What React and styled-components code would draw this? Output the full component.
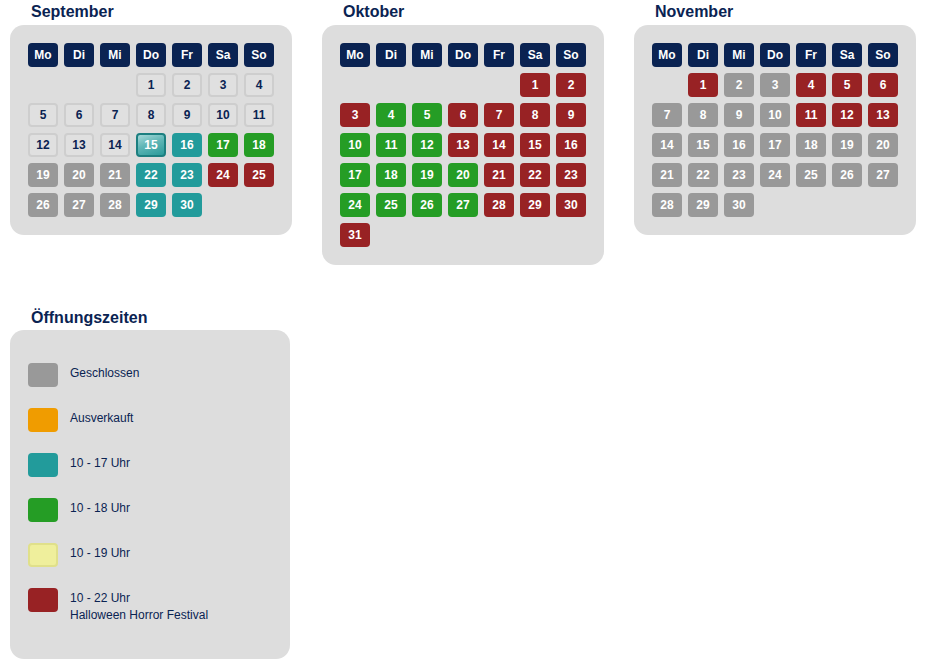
import React from "react";
import styled, { createGlobalStyle, css } from "styled-components";

const Global = createGlobalStyle`
  html, body { margin: 0; padding: 0; background: #ffffff; }
  body { font-family: "Liberation Sans", Arial, sans-serif; }
`;

const NAVY = "#0a2352";

const COLORS = {
  closed: "#999999",
  soldout: "#f09c00",
  h17: "#229b9b",
  h18: "#259d25",
  h19: "#efef9c",
  h22: "#982224",
};

const Page = styled.div`
  padding: 3px 10px 0 10px;
  display: flex;
  flex-direction: column;
  gap: 44px;
`;

const MonthRow = styled.div`
  display: flex;
  align-items: flex-start;
  gap: 30px;
`;

const Block = styled.section`
  display: flex;
  flex-direction: column;
  gap: ${(p) => p.$gap || 4}px;
`;

const Title = styled.h2`
  margin: 0;
  padding-left: 21px;
  font-size: 16px;
  line-height: 18px;
  font-weight: 700;
  color: ${NAVY};
`;

const Card = styled.div`
  background: #dddddd;
  border-radius: 14px;
  padding: 18px;
`;

const Grid = styled.div`
  display: grid;
  grid-template-columns: repeat(7, 30px);
  grid-auto-rows: 24px;
  gap: 6px;
`;

const cellBase = css`
  box-sizing: border-box;
  width: 30px;
  height: 24px;
  border-radius: 4px;
  display: flex;
  align-items: center;
  justify-content: center;
  font-size: 12px;
  font-weight: 700;
  color: #ffffff;
`;

const Head = styled.div`
  ${cellBase};
  background: ${NAVY};
`;

const Day = styled.div`
  ${cellBase};
  grid-column-start: ${(p) => p.$start || "auto"};
  background: ${(p) => COLORS[p.$kind] || "transparent"};
  ${(p) =>
    p.$kind === "open" &&
    css`
      background: #e0e0e0;
      border: 2px solid #cecece;
      color: ${NAVY};
    `}
  ${(p) =>
    p.$kind === "today" &&
    css`
      background: linear-gradient(160deg, #a6d9d9 0%, #5fb6b6 45%, #2a9a9a 100%);
      border: 2px solid #1c7f80;
    `}
`;

const LegendCard = styled(Card)`
  width: 244px;
  padding: 33px 18px 35px 18px;
  display: flex;
  flex-direction: column;
  gap: 21px;
`;

const LegendItem = styled.div`
  display: flex;
  align-items: flex-start;
  gap: 12px;
`;

const Swatch = styled.div`
  box-sizing: border-box;
  flex: none;
  width: 30px;
  height: 24px;
  border-radius: 4px;
  background: ${(p) => COLORS[p.$kind]};
  ${(p) =>
    p.$kind === "h19" &&
    css`
      border: 2px solid #e0e08a;
    `}
`;

const LegendText = styled.div`
  padding-top: 2px;
  font-size: 12px;
  line-height: 16.8px;
  color: ${NAVY};
`;

const HEADS = ["Mo", "Di", "Mi", "Do", "Fr", "Sa", "So"];

function build(spec) {
  const out = [];
  spec.forEach(([from, to, kind]) => {
    for (let d = from; d <= to; d++) out.push(kind);
  });
  return out;
}

const MONTHS = [
  {
    name: "September",
    start: 4,
    days: build([
      [1, 14, "open"],
      [15, 15, "today"],
      [16, 16, "h17"],
      [17, 18, "h18"],
      [19, 21, "closed"],
      [22, 23, "h17"],
      [24, 25, "h22"],
      [26, 28, "closed"],
      [29, 30, "h17"],
    ]),
  },
  {
    name: "Oktober",
    start: 6,
    days: build([
      [1, 3, "h22"],
      [4, 5, "h18"],
      [6, 9, "h22"],
      [10, 12, "h18"],
      [13, 16, "h22"],
      [17, 20, "h18"],
      [21, 23, "h22"],
      [24, 27, "h18"],
      [28, 31, "h22"],
    ]),
  },
  {
    name: "November",
    start: 2,
    days: build([
      [1, 1, "h22"],
      [2, 3, "closed"],
      [4, 6, "h22"],
      [7, 10, "closed"],
      [11, 13, "h22"],
      [14, 30, "closed"],
    ]),
  },
];

const LEGEND = [
  { kind: "closed", lines: ["Geschlossen"] },
  { kind: "soldout", lines: ["Ausverkauft"] },
  { kind: "h17", lines: ["10 - 17 Uhr"] },
  { kind: "h18", lines: ["10 - 18 Uhr"] },
  { kind: "h19", lines: ["10 - 19 Uhr"] },
  { kind: "h22", lines: ["10 - 22 Uhr", "Halloween Horror Festival"] },
];

function Month({ month }) {
  return (
    <Block>
      <Title>{month.name}</Title>
      <Card>
        <Grid>
          {HEADS.map((h) => (
            <Head key={h}>{h}</Head>
          ))}
          {month.days.map((kind, i) => (
            <Day key={i} $kind={kind} $start={i === 0 ? month.start : undefined}>
              {i + 1}
            </Day>
          ))}
        </Grid>
      </Card>
    </Block>
  );
}

export default function App() {
  return (
    <>
      <Global />
      <Page>
        <MonthRow>
          {MONTHS.map((m) => (
            <Month key={m.name} month={m} />
          ))}
        </MonthRow>
        <Block $gap={3}>
          <Title>Öffnungszeiten</Title>
          <LegendCard>
            {LEGEND.map((l) => (
              <LegendItem key={l.kind}>
                <Swatch $kind={l.kind} />
                <LegendText>
                  {l.lines.map((t, i) => (
                    <div key={i}>{t}</div>
                  ))}
                </LegendText>
              </LegendItem>
            ))}
          </LegendCard>
        </Block>
      </Page>
    </>
  );
}
